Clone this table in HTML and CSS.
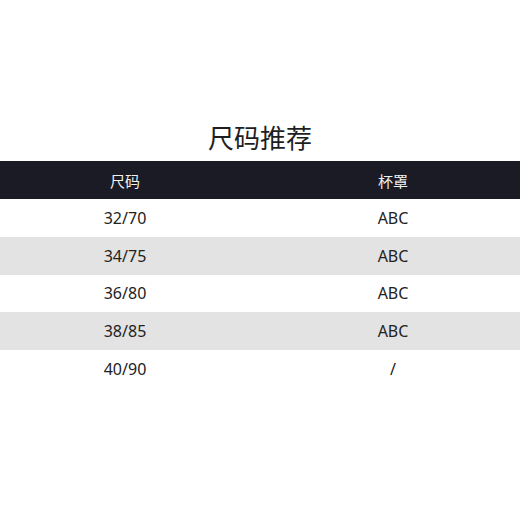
FILE: index.html
```html
<!DOCTYPE html>
<html lang="zh">
<head>
<meta charset="utf-8">
<link rel="stylesheet" href="styles.css">
</head>
<body>
<div class="page">
  <h1 class="title">尺码推荐</h1>
  <div class="table">
    <div class="row head"><div>尺码</div><div>杯罩</div></div>
    <div class="row"><div>32/70</div><div>ABC</div></div>
    <div class="row alt"><div>34/75</div><div>ABC</div></div>
    <div class="row"><div>36/80</div><div>ABC</div></div>
    <div class="row alt"><div>38/85</div><div>ABC</div></div>
    <div class="row"><div>40/90</div><div>/</div></div>
  </div>
</div>
</body>
</html>
```
FILE: styles.css
```css
html, body {
  margin: 0;
  padding: 0;
  background: #ffffff;
}
.page {
  width: 520px;
  height: 520px;
  overflow: hidden;
  padding-top: 119px;
  box-sizing: border-box;
  font-family: "Noto Sans", "Noto Sans CJK SC", sans-serif;
  color: #222222;
}
.title {
  margin: 0 0 6px 0;
  font-family: "Noto Sans CJK SC", sans-serif;
  font-weight: 400;
  font-size: 26px;
  line-height: 36px;
  text-align: center;
  color: #1e1e1e;
}
.table {
  width: 536px;
  margin-left: -9px;
}
.row {
  display: grid;
  grid-template-columns: 268px 268px;
  height: 37.75px;
  align-items: center;
  font-size: 16px;
  text-align: center;
}
.row.alt {
  background: #e3e3e3;
}
.row.head {
  height: 38px;
  background: #1a1b24;
  color: #f0f0f0;
  font-family: "Noto Sans CJK SC", sans-serif;
  font-size: 15px;
}
```
